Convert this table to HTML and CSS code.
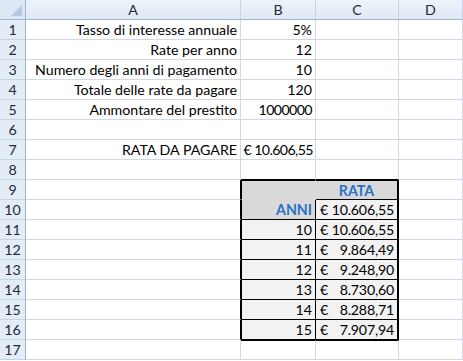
FILE: index.html
```html
<!DOCTYPE html>
<html>
<head>
<meta charset="utf-8">
<link rel="stylesheet" href="styles.css">
</head>
<body>
<div class="sheet">
  <div class="corner"><span class="tri"></span></div><div class="ch">A</div><div class="ch">B</div><div class="ch">C</div><div class="ch last">D</div>

  <div class="rh">1</div><div class="c r">Tasso di interesse annuale</div><div class="c r">5%</div><div class="c"></div><div class="c"></div>
  <div class="rh">2</div><div class="c r">Rate per anno</div><div class="c r">12</div><div class="c"></div><div class="c"></div>
  <div class="rh">3</div><div class="c r">Numero degli anni di pagamento</div><div class="c r">10</div><div class="c"></div><div class="c"></div>
  <div class="rh">4</div><div class="c r">Totale delle rate da pagare</div><div class="c r">120</div><div class="c"></div><div class="c"></div>
  <div class="rh">5</div><div class="c r">Ammontare del prestito</div><div class="c r num">1000000</div><div class="c"></div><div class="c"></div>
  <div class="rh">6</div><div class="c"></div><div class="c"></div><div class="c"></div><div class="c"></div>
  <div class="rh">7</div><div class="c r">RATA DA PAGARE</div><div class="c r tight num">€ 10.606,55</div><div class="c"></div><div class="c"></div>
  <div class="rh">8</div><div class="c"></div><div class="c above"></div><div class="c above"></div><div class="c"></div>

  <div class="rh">9</div><div class="c edge"></div><div class="c tb b-head"></div><div class="c tc c-head hd">RATA</div><div class="c"></div>
  <div class="rh">10</div><div class="c edge"></div><div class="c tb b-sub r hd">ANNI</div><div class="c tc money"><span>€</span><span>10.606,55</span></div><div class="c"></div>
  <div class="rh">11</div><div class="c edge"></div><div class="c tb r">10</div><div class="c tc money"><span>€</span><span>10.606,55</span></div><div class="c"></div>
  <div class="rh">12</div><div class="c edge"></div><div class="c tb r">11</div><div class="c tc money"><span>€</span><span>9.864,49</span></div><div class="c"></div>
  <div class="rh">13</div><div class="c edge"></div><div class="c tb r">12</div><div class="c tc money"><span>€</span><span>9.248,90</span></div><div class="c"></div>
  <div class="rh">14</div><div class="c edge"></div><div class="c tb r">13</div><div class="c tc money"><span>€</span><span>8.730,60</span></div><div class="c"></div>
  <div class="rh">15</div><div class="c edge"></div><div class="c tb r">14</div><div class="c tc money"><span>€</span><span>8.288,71</span></div><div class="c"></div>
  <div class="rh">16</div><div class="c edge"></div><div class="c tb r">15</div><div class="c tc money"><span>€</span><span>7.907,94</span></div><div class="c"></div>
  <div class="rh">17</div><div class="c"></div><div class="c below"></div><div class="c below"></div><div class="c"></div>
</div>
</body>
</html>
```

FILE: styles.css
```css
html, body {
  margin: 0;
  padding: 0;
  background: #ffffff;
}

.sheet {
  width: 463px;
  height: 361px;
  overflow: hidden;
  display: grid;
  grid-template-columns: 26px 215px 75px 83px 1fr;
  grid-template-rows: 20px;
  grid-auto-rows: 20px;
  font-family: Lato, "Open Sans", sans-serif;
  font-size: 14.2px;
  color: #000000;
}

.sheet > div {
  box-sizing: border-box;
  white-space: nowrap;
  line-height: 20px;
}

.corner {
  background: #dde7f4;
  border-right: 1px solid #9eb6ce;
  border-bottom: 1px solid #9eb6ce;
  position: relative;
}

.tri {
  position: absolute;
  right: 3px;
  bottom: 3px;
  width: 0;
  height: 0;
  border-left: 11px solid transparent;
  border-bottom: 11px solid #b6c9e2;
}

.ch {
  background: linear-gradient(#eef3fa, #dfe8f5);
  border-right: 1px solid #c4d3e6;
  border-bottom: 1px solid #9eb6ce;
  text-align: center;
  color: #1f2a3a;
}

.rh {
  background: #e4ecf7;
  border-right: 1px solid #9eb6ce;
  border-bottom: 1px solid #c4d3e6;
  text-align: center;
  color: #1f2a3a;
}

.c {
  border-right: 1px solid #d0d7e5;
  border-bottom: 1px solid #d0d7e5;
  padding: 0 3px 0 3px;
}

.r {
  text-align: right;
}

.num {
  letter-spacing: -0.6px;
}

.tight {
  padding-left: 0;
  padding-right: 2px;
}

.above {
  border-bottom-color: #000000;
}

.below {
  border-top: 1px solid #000000;
}

.edge {
  border-right-color: #000000;
}

.tb {
  border-left: 1px solid #000000;
  border-right-color: #000000;
  border-bottom-color: #000000;
  background: #f2f2f2;
}

.tc {
  border-right: 2px solid #000000;
  border-bottom-color: #000000;
  background: #f2f2f2;
}

.b-head {
  border-top: 1px solid #000000;
  background: #d9d9d9;
  border-right-color: #d9d9d9;
  border-bottom-color: #d9d9d9;
}

.c-head {
  border-top: 1px solid #000000;
  background: #d9d9d9;
  text-align: center;
}

.b-sub {
  background: #d9d9d9;
}

.hd {
  color: #2a72c4;
  font-weight: bold;
  letter-spacing: 0;
}

.money {
  display: flex;
  justify-content: space-between;
  padding: 0 3px 0 4px;
  letter-spacing: -0.2px;
}
```
